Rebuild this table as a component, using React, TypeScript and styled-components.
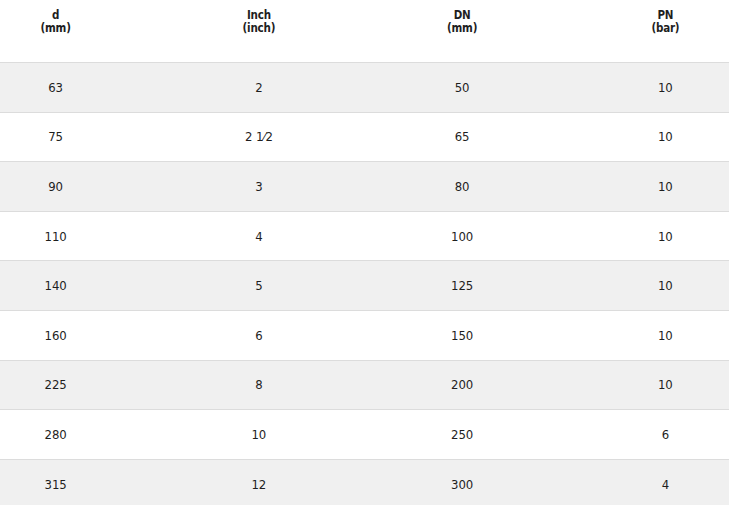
import React from "react";
import styled, { createGlobalStyle } from "styled-components";

const Global = createGlobalStyle`
  html, body { margin: 0; padding: 0; background: #ffffff; }
  body { font-family: "DejaVu Sans Condensed", "Liberation Sans Narrow", "Roboto", sans-serif; color: #1e1e1e; }
`;

const Frame = styled.div`
  width: 729px;
  height: 505px;
  overflow: hidden;
`;

const Table = styled.div`
  width: 813px;
  margin-left: -46px;
  display: flex;
  flex-direction: column;
`;

const Row = styled.div<{ $shade?: boolean }>`
  display: grid;
  grid-template-columns: repeat(4, 1fr);
  height: 49.6px;
  box-sizing: border-box;
  border-top: 1px solid #dcdcdc;
  background: ${(p) => (p.$shade ? "#f0f0f0" : "#ffffff")};
  align-items: center;
`;

const HeadRow = styled.div`
  display: grid;
  grid-template-columns: repeat(4, 1fr);
  height: 62px;
  box-sizing: border-box;
  padding-top: 9px;
  align-items: start;
`;

const HeadCell = styled.div`
  display: flex;
  flex-direction: column;
  align-items: center;
  font-weight: 700;
  font-size: 11.5px;
  line-height: 13px;
  letter-spacing: -0.2px;
  color: #1e1e1e;
`;

const HeadLine = styled.span`
  display: block;
  height: 13px;
`;

const Cell = styled.div`
  text-align: center;
  font-size: 13px;
  line-height: 16px;
  padding-top: 1px;
  color: #1e1e1e;
`;

const headers: [string, string][] = [
  ["d", "(mm)"],
  ["Inch", "(inch)"],
  ["DN", "(mm)"],
  ["PN", "(bar)"],
];

const rows: string[][] = [
  ["63", "2", "50", "10"],
  ["75", "2 1⁄2", "65", "10"],
  ["90", "3", "80", "10"],
  ["110", "4", "100", "10"],
  ["140", "5", "125", "10"],
  ["160", "6", "150", "10"],
  ["225", "8", "200", "10"],
  ["280", "10", "250", "6"],
  ["315", "12", "300", "4"],
];

export default function App() {
  return (
    <Frame>
      <Global />
      <Table>
        <HeadRow>
          {headers.map(([a, b]) => (
            <HeadCell key={a}>
              <HeadLine>{a}</HeadLine>
              <HeadLine>{b}</HeadLine>
            </HeadCell>
          ))}
        </HeadRow>
        {rows.map((r, i) => (
          <Row key={i} $shade={i % 2 === 0}>
            {r.map((c, j) => (
              <Cell key={j}>{c}</Cell>
            ))}
          </Row>
        ))}
      </Table>
    </Frame>
  );
}
